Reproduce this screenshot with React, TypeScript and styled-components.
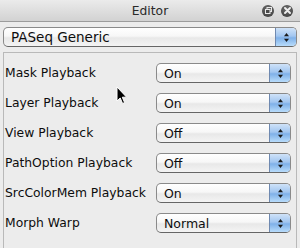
import React from "react";
import styled, { createGlobalStyle } from "styled-components";

const Global = createGlobalStyle`
  html, body { margin: 0; padding: 0; background: #ececec; }
  body { font-family: "DejaVu Sans", "Liberation Sans", sans-serif; }
`;

const Window = styled.div`
  position: relative;
  width: 300px;
  height: 248px;
  overflow: hidden;
  background: #ececec;
  display: flex;
  flex-direction: column;
`;

const TitleBar = styled.div`
  height: 22px;
  flex: none;
  display: grid;
  grid-template-columns: 1fr auto 1fr;
  align-items: center;
  background: linear-gradient(#ebebeb, #d2d2d2);
  border-bottom: 1px solid #9c9c9c;
  box-sizing: border-box;
`;

const Title = styled.div`
  grid-column: 2;
  font-size: 12.3px;
  color: #2a2a2a;
`;

const Controls = styled.div`
  grid-column: 3;
  display: flex;
  justify-content: flex-end;
  gap: 7px;
  padding-right: 7px;
`;

const CtrlButton = styled.div`
  width: 12px;
  height: 12px;
  border-radius: 50%;
  background: radial-gradient(circle at 50% 35%, #6e6e6e, #3a3a3a);
  display: flex;
  align-items: center;
  justify-content: center;
`;

const Body = styled.div`
  flex: 1;
  display: flex;
  flex-direction: column;
  padding: 5px 3px 0 3px;
`;

const PopUp = styled.div<{ $height?: number }>`
  height: ${(p) => p.$height || 20}px;
  box-sizing: border-box;
  display: flex;
  border: 1px solid #8a8a8a;
  border-bottom-color: #666;
  border-radius: 5px;
  overflow: hidden;
  background: linear-gradient(#ffffff 0%, #f7f7f7 45%, #e8e8e8 55%, #f4f4f4 100%);
`;

const PopValue = styled.div<{ $size?: number }>`
  flex: 1;
  display: flex;
  align-items: center;
  padding-left: 7px;
  font-size: ${(p) => p.$size || 12.5}px;
  color: #0d0d0d;
`;

const Stepper = styled.div`
  width: 20px;
  flex: none;
  border-left: 1px solid #6f89b0;
  background: linear-gradient(#cfe2f8 0%, #a2c6f0 45%, #7fb0e8 55%, #b8dcfb 100%);
  display: flex;
  align-items: center;
  justify-content: center;
`;

const Panel = styled.div`
  margin-top: 5px;
  flex: 1;
  border: 1px solid #b9b9b9;
  border-bottom: none;
  padding-top: 5px;
  display: flex;
  flex-direction: column;
`;

const Row = styled.div`
  height: 30px;
  display: grid;
  grid-template-columns: 1fr 135px;
  align-items: center;
  padding-right: 5px;
`;

const Label = styled.div`
  font-size: 12.35px;
  color: #0d0d0d;
  padding-left: 1px;
  white-space: nowrap;
`;

const Cursor = styled.svg`
  position: absolute;
  left: 116px;
  top: 86px;
`;

const Arrows = () => (
  <svg width="7" height="11" viewBox="0 0 7 11">
    <path d="M3.5 1 L6 4.2 L1 4.2 Z" fill="#1a1a1a" />
    <path d="M3.5 10 L6 6.8 L1 6.8 Z" fill="#1a1a1a" />
  </svg>
);

const Select = ({ value, height, size }: { value: string; height?: number; size?: number }) => (
  <PopUp $height={height}>
    <PopValue $size={size}>{value}</PopValue>
    <Stepper>
      <Arrows />
    </Stepper>
  </PopUp>
);

const rows: [string, string][] = [
  ["Mask Playback", "On"],
  ["Layer Playback", "On"],
  ["View Playback", "Off"],
  ["PathOption Playback", "Off"],
  ["SrcColorMem Playback", "On"],
  ["Morph Warp", "Normal"],
];

export default function App() {
  return (
    <>
      <Global />
      <Window>
        <TitleBar>
          <Title>Editor</Title>
          <Controls>
            <CtrlButton>
              <svg width="7" height="7" viewBox="0 0 7 7">
                <rect x="2" y="0.5" width="4.5" height="4" fill="none" stroke="#e8e8e8" strokeWidth="1" />
                <rect x="0.5" y="2.5" width="4.5" height="4" fill="#4a4a4a" stroke="#e8e8e8" strokeWidth="1" />
              </svg>
            </CtrlButton>
            <CtrlButton>
              <svg width="7" height="7" viewBox="0 0 7 7">
                <path d="M1 1 L6 6 M6 1 L1 6" stroke="#eeeeee" strokeWidth="1.9" strokeLinecap="round" />
              </svg>
            </CtrlButton>
          </Controls>
        </TitleBar>
        <Body>
          <Select value="PASeq Generic" height={20} size={13.5} />
          <Panel>
            {rows.map(([label, value]) => (
              <Row key={label}>
                <Label>{label}</Label>
                <Select value={value} />
              </Row>
            ))}
          </Panel>
        </Body>
        <Cursor width="12" height="19" viewBox="0 0 12 19">
          <path
            d="M1 1 L1 15 L4.2 12 L6.6 17.5 L8.6 16.6 L6.3 11.2 L10.6 11.2 Z"
            fill="#000"
            stroke="#fff"
            strokeWidth="1"
            strokeLinejoin="round"
          />
        </Cursor>
      </Window>
    </>
  );
}
